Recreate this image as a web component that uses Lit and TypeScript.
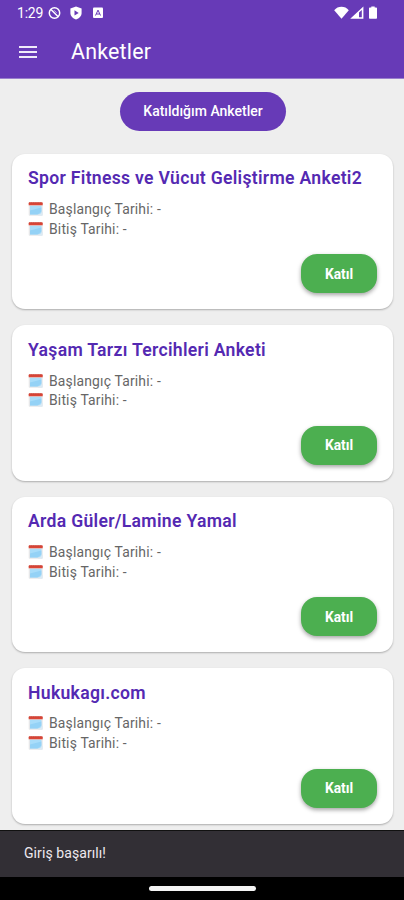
import { LitElement, html, css } from "lit";
import { customElement, property } from "lit/decorators.js";

@customElement("calendar-icon")
class CalendarIcon extends LitElement {
  static styles = css`
    :host { display: block; width: 15px; height: 14px; flex: none; }
    svg { display: block; }
  `;
  render() {
    return html`<svg width="15" height="14" viewBox="0 0 15 14">
      <rect x="0.7" y="0.4" width="14" height="13.4" rx="0.8" fill="#e6e7e9" />
      <rect x="2" y="3.8" width="11.4" height="8.6" fill="#a9ddfa" />
      <path d="M2 8.6L13.4 5.400v4L9.500 12.400H2z" fill="#94d2f6" />
      <path d="M9.800 13.800l4.900-4v3.200q0 .8-.8.800z" fill="#dceaf3" />
      <path d="M.7 3.300V1.200Q.7.300 1.500.3h12.400q.8 0 .8.900v2.100z" fill="#dc4637" />
      <path d="M1.300 1h12.800" stroke="#b9453b" stroke-width=".8" stroke-dasharray="1 .8" />
    </svg>`;
  }
}

@customElement("survey-card")
class SurveyCard extends LitElement {
  @property() heading = "";
  static styles = css`
    :host {
      display: flex; flex-direction: column; box-sizing: border-box;
      height: 155.4px; padding: 12.4px 16px 16px; border-radius: 13px;
      background: #fff; box-shadow: 0 1px 2px rgba(0, 0, 0, 0.28);
    }
    .title {
      font-size: 17.6px; line-height: 24px; font-weight: 600;
      letter-spacing: 0.3px; color: #5429b2; white-space: nowrap;
    }
    .dates { margin-top: 9px; }
    .row {
      display: flex; align-items: center; gap: 6px; height: 19.6px;
      font-size: 13.9px; letter-spacing: 0.18px; color: #666; white-space: nowrap;
    }
    .join {
      margin-top: auto; align-self: flex-end; width: 76px; height: 39px;
      border: 0; border-radius: 16px; background: #4caf50; color: #fff;
      font: 700 13.8px Roboto, sans-serif; padding: 0;
      box-shadow: 0 2px 4px rgba(0, 0, 0, 0.36);
    }
  `;
  render() {
    return html`
      <div class="title">${this.heading}</div>
      <div class="dates">
        <div class="row"><calendar-icon></calendar-icon><span>Başlangıç Tarihi: -</span></div>
        <div class="row"><calendar-icon></calendar-icon><span>Bitiş Tarihi: -</span></div>
      </div>
      <button class="join">Katıl</button>
    `;
  }
}

@customElement("app-root")
class AppRoot extends LitElement {
  static styles = css`
    :host {
      display: flex; flex-direction: column; height: 900px; width: 404px;
      overflow: hidden; background: #eee; font-family: Roboto, sans-serif;
    }
    .top { flex: none; height: 78px; background: #673ab7; color: #fff; border-bottom: 1px solid #9a7fcd; }
    .status { display: flex; align-items: center; height: 25px; padding: 0 25px 0 17px; font-size: 14px; }
    .time { width: 27px; letter-spacing: -0.2px; }
    .left { margin-left: 4px; display: block; }
    .right { margin-left: auto; display: block; }
    .bar { display: flex; align-items: center; height: 53px; padding-left: 19px; gap: 34px; }
    .name { font-size: 21.4px; letter-spacing: 0.2px; }
    .body { flex: 1; min-height: 0; overflow: hidden; display: flex; flex-direction: column; padding: 12.5px 11px 0 12px; }
    .mine {
      flex: none; align-self: center; margin-left: 1px; width: 166px; height: 39px; border: 0; border-radius: 20px;
      background: #673ab7; color: #fff; font: 500 14px Roboto, sans-serif; padding: 0;
    }
    .list { margin-top: 23.5px; display: flex; flex-direction: column; gap: 16px; }
    survey-card { flex: none; }
    .snack {
      flex: none; box-sizing: border-box; height: 47px; border-top: 1px solid #111;
      background: #322f35; color: #eee9ef; padding-left: 24px;
      font-size: 14px; letter-spacing: 0.08px; line-height: 45px;
    }
    .nav { flex: none; height: 23px; background: #000; display: flex; justify-content: center; }
    .handle { width: 107px; height: 5px; margin-top: 9px; border-radius: 3px; background: #f4f4f4; }
  `;

  private surveys = [
    "Spor Fitness ve Vücut Geliştirme Anketi2",
    "Yaşam Tarzı Tercihleri Anketi",
    "Arda Güler/Lamine Yamal",
    "Hukukagı.com",
  ];

  render() {
    return html`
      <header class="top">
        <div class="status">
          <span class="time">1:29</span>
          <svg class="left" width="56" height="14" viewBox="0 0 56 14">
            <g fill="none" stroke="#fff" stroke-width="1.5">
              <circle cx="6.5" cy="7" r="5.2" />
              <path d="M3 3.5l7 7" />
              <path d="M6 4.2l2.6 2.6" stroke-width="1" opacity=".6" />
            </g>
            <path d="M28 .4l5.600 2.100v4.500c0 3-2.400 5.400-5.600 6.500-3.200-1.100-5.600-3.500-5.600-6.500V2.500z" fill="#fff" />
            <path d="M26.500 4.300l4.200 2.600-4.200 2.600z" fill="#673ab7" />
            <rect x="45" y="1.500" width="10" height="10.500" rx="1" fill="#fff" />
            <path d="M47.500 9.500l2.500-5.400 2.500 5.400M48.400 8h3.200" fill="none" stroke="#673ab7" stroke-width="1" />
          </svg>
          <svg class="right" width="45" height="14" viewBox="0 0 45 14">
            <path d="M7.500 12.700L.2 4.200Q3.200 .8 7.500 .8t7.300 3.400z" fill="#fff" />
            <path fill-rule="evenodd" d="M16.200 12.800L29.400.6v12.200zM25 6.600v4.600h2.800V4.100z" fill="#fff" />
            <path d="M37.300.4h3.400v1.100h1.500q.8 0 .8.800v9.700q0 .8-.8.800h-6.400q-.8 0-.8-.8V2.300q0-.8.800-.8h1.500z" fill="#fff" />
          </svg>
        </div>
        <div class="bar">
          <svg width="18" height="14" viewBox="0 0 18 14">
            <path d="M0 2h18M0 7h18M0 12h18" stroke="#f0eafa" stroke-width="2" />
          </svg>
          <span class="name">Anketler</span>
        </div>
      </header>
      <main class="body">
        <button class="mine">Katıldığım Anketler</button>
        <div class="list">
          ${this.surveys.map((s) => html`<survey-card .heading=${s}></survey-card>`)}
        </div>
      </main>
      <div class="snack">Giriş başarılı!</div>
      <div class="nav"><div class="handle"></div></div>
    `;
  }
}
